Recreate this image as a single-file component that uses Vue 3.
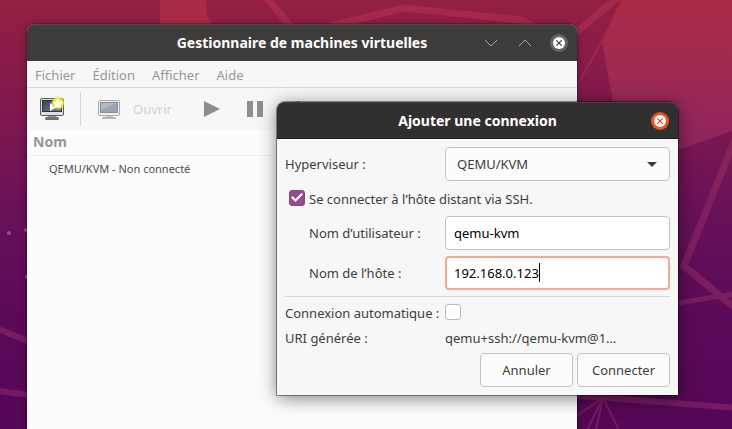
<script setup>
import { nextTick, onMounted, ref, watch } from 'vue'

const menus = ['Fichier', 'Édition', 'Afficher', 'Aide']
const ssh = ref(true)
const auto = ref(false)
const user = ref('qemu-kvm')
const host = ref('192.168.0.123')
const hostField = ref(null)
const caretLeft = ref(0)

// Places the text cursor after the last character of the host name.
function placeCaret() {
  const style = getComputedStyle(hostField.value)
  const ctx = document.createElement('canvas').getContext('2d')
  ctx.font = `${style.fontSize} ${style.fontFamily}`
  caretLeft.value = Math.round(ctx.measureText(host.value).width) + 9
}

onMounted(placeCaret)
watch(host, () => nextTick(placeCaret))
</script>

<template>
  <main class="desktop">
    <svg class="wallpaper" viewBox="0 0 732 429" preserveAspectRatio="xMidYMid slice" aria-hidden="true">
      <defs>
        <linearGradient id="base" x1="0" y1="0" x2="0" y2="1">
          <stop offset="0" stop-color="#932043" />
          <stop offset="0.2" stop-color="#851a4b" />
          <stop offset="0.5" stop-color="#681159" />
          <stop offset="0.75" stop-color="#5b0a58" />
          <stop offset="1" stop-color="#540755" />
        </linearGradient>
        <linearGradient id="facet" gradientUnits="userSpaceOnUse" x1="0" y1="0" x2="0" y2="150">
          <stop offset="0" stop-color="#aa2b45" />
          <stop offset="0.45" stop-color="#a02a51" />
          <stop offset="1" stop-color="#8d245f" />
        </linearGradient>
        <linearGradient id="beam" gradientUnits="userSpaceOnUse" x1="0" y1="0" x2="0" y2="429">
          <stop offset="0" stop-color="#a8294a" />
          <stop offset="0.5" stop-color="#7e1f60" />
          <stop offset="1" stop-color="#751961" />
        </linearGradient>
      </defs>
      <rect width="732" height="429" fill="url(#base)" />
      <path d="M160 0H206L207 15 214 28H160Z" fill="url(#facet)" />
      <path d="M621 0H732V131L678 150 630 140 613 102 602 41Z" fill="url(#facet)" />
      <g fill="none" stroke="url(#beam)" stroke-width="7">
        <path d="M265 -4L294 30" />
        <path d="M330 26L404 8 520 20 545 32" />
        <path d="M622 -6L573 35" />
        <path d="M602 41L577 86" stroke-width="2" />
        <path d="M740 127L684 266 740 312" />
        <path d="M672 304L740 293" stroke-width="5" />
        <path d="M570 395L740 408" stroke-width="6" />
        <path d="M-2 329L30 342" stroke-width="6" />
        <path d="M-2 391L30 395" stroke-width="6" />
      </g>
      <g fill="none" stroke="url(#beam)" stroke-width="2">
        <path d="M603 398L570 420M603 398L583 438M603 398L594 438M603 398L623 438" />
      </g>
      <g fill="#a04c91">
        <circle cx="9" cy="233" r="2" />
        <circle cx="26" cy="230" r="2" />
        <circle cx="27" cy="277" r="2" />
      </g>
    </svg>

    <section class="window manager" aria-labelledby="manager-title">
      <header class="titlebar">
        <h1 id="manager-title">Gestionnaire de machines virtuelles</h1>
        <div class="controls">
          <button type="button" aria-label="Réduire">
            <svg width="18" height="18" viewBox="0 0 18 18"><path d="M3 6L9 12 15 6" fill="none" stroke="#a9a8a6" /></svg>
          </button>
          <button type="button" aria-label="Agrandir">
            <svg width="18" height="18" viewBox="0 0 18 18"><path d="M3 12L9 6 15 12" fill="none" stroke="#a9a8a6" /></svg>
          </button>
          <button type="button" aria-label="Fermer">
            <svg width="18" height="18" viewBox="0 0 18 18">
              <circle cx="9" cy="9" r="9" fill="#666563" /><circle cx="9" cy="9" r="6" fill="#fff" />
              <path d="M6.3 6.3L11.7 11.7M11.7 6.3L6.3 11.7" stroke="#3e3d3b" stroke-width="1.2" />
            </svg>
          </button>
        </div>
      </header>
      <nav class="menubar">
        <button v-for="menu in menus" :key="menu" type="button">{{ menu }}</button>
      </nav>
      <div class="toolbar">
        <button type="button" class="create" aria-label="Nouvelle machine virtuelle">
          <svg width="28" height="26" viewBox="0 0 28 26">
            <defs>
              <linearGradient id="screen" x1="0" y1="0" x2="1" y2="1">
                <stop offset="0" stop-color="#33404f" /><stop offset="1" stop-color="#77869a" />
              </linearGradient>
              <radialGradient id="glow">
                <stop offset="0.5" stop-color="#f1ee25" /><stop offset="0.75" stop-color="#eeea20" stop-opacity="0.8" />
                <stop offset="1" stop-color="#eeea20" stop-opacity="0" />
              </radialGradient>
            </defs>
            <rect x="2.5" y="2.5" width="23" height="17" rx="1.5" fill="#dededb" stroke="#5d5f5b" />
            <rect x="4.5" y="4.5" width="19" height="11" fill="url(#screen)" stroke="#2c3540" />
            <path d="M10 20H18L19 21.5H9Z" fill="#999" />
            <rect x="7" y="21" width="14" height="3" rx="1.5" fill="#70726f" />
            <path d="M12 7L19 11 12 15Z" fill="#fff" />
            <circle cx="20" cy="7" r="7" fill="url(#glow)" />
            <path d="M19.5 1.8L21.5 5.200 25.500 6 22.600 8.700 23.300 12.500 19.800 10.700 16.300 12.500 16.900 8.700 14 6 18 5.200Z" fill="#fffff2" />
          </svg>
        </button>
        <span class="divider"></span>
        <button type="button" class="open" disabled>
          <svg width="24" height="24" viewBox="0 0 24 24">
            <rect x="1.5" y="3.5" width="21" height="15" rx="1.5" fill="#f0f0f0" stroke="#aaa" />
            <rect x="3.5" y="5.5" width="17" height="10" fill="#9aa3af" stroke="#848d98" />
            <path d="M4 6H20L4 13Z" fill="#b1b8c2" />
            <path d="M9 19H15L16 20H8Z" fill="#c5c5c5" />
            <rect x="5" y="20" width="14" height="2" rx="1" fill="#b4b4b4" />
          </svg>
          <span>Ouvrir</span>
        </button>
        <button type="button" class="play" disabled aria-label="Démarrer">
          <svg width="16" height="16" viewBox="0 0 16 16"><path d="M0 0L16 8 0 16Z" fill="#8d8e8f" /></svg>
        </button>
        <button type="button" class="pause" disabled aria-label="Suspendre">
          <svg width="16" height="16" viewBox="0 0 16 16"><path d="M0 0H6V16H0ZM10 0H16V16H10Z" fill="#8d8e8f" /></svg>
        </button>
        <button type="button" class="power" disabled aria-label="Éteindre">
          <svg width="16" height="16" viewBox="0 0 16 16"><path d="M5 3A6 6 0 1 0 11 3M8 0V8" fill="none" stroke="#8d8e8f" stroke-width="2" /></svg>
        </button>
      </div>
      <table class="machines">
        <thead><tr><th scope="col">Nom</th></tr></thead>
        <tbody><tr><td>QEMU/KVM - Non connecté</td></tr></tbody>
      </table>
    </section>

    <section class="window dialog" role="dialog" aria-labelledby="dialog-title">
      <header class="titlebar">
        <h2 id="dialog-title">Ajouter une connexion</h2>
        <div class="controls">
          <button type="button" aria-label="Fermer">
            <svg width="18" height="18" viewBox="0 0 18 18">
              <circle cx="9" cy="9" r="9" fill="#e95420" /><circle cx="9" cy="9" r="6" fill="#fff" />
              <path d="M6.3 6.3L11.7 11.7M11.7 6.3L6.3 11.7" stroke="#d9481a" stroke-width="1.2" />
            </svg>
          </button>
        </div>
      </header>
      <form class="form" @submit.prevent>
        <label for="hypervisor">Hyperviseur :</label>
        <div class="field">
          <select id="hypervisor"><option>QEMU/KVM</option></select>
          <svg class="arrow" width="10" height="5" viewBox="0 0 10 5"><path d="M0 0H10L5 5Z" fill="#3d3d3d" /></svg>
        </div>
        <label class="ssh"><input v-model="ssh" type="checkbox" /><span>Se connecter à l’hôte distant via SSH.</span></label>
        <label class="nested" for="user">Nom d’utilisateur :</label>
        <input id="user" v-model="user" class="entry" type="text" />
        <label class="nested" for="host">Nom de l’hôte :</label>
        <div class="field">
          <input id="host" ref="hostField" v-model="host" class="entry active" type="text" />
          <span class="caret" :style="{ left: caretLeft + 'px' }"></span>
        </div>
        <hr />
        <label class="auto" for="auto">Connexion automatique :</label>
        <input id="auto" v-model="auto" type="checkbox" />
        <span class="uri">URI générée :</span>
        <output class="uri">qemu+ssh://qemu-kvm@1…</output>
        <div class="actions">
          <button type="button">Annuler</button>
          <button type="submit">Connecter</button>
        </div>
      </form>
    </section>
  </main>
</template>

<style>
body {
  margin: 0;
}
</style>

<style scoped>
.desktop {
  position: relative;
  min-height: 100vh;
  overflow: hidden;
  background: #5a0a58;
  font: 13px/18px "Noto Sans", sans-serif;
  color: #3d3d3d;
}
.desktop *,
.desktop *::before {
  box-sizing: border-box;
}
button,
input,
select {
  margin: 0;
  font: inherit;
  color: inherit;
}
svg {
  display: block;
  flex: none;
}
.wallpaper {
  position: absolute;
  inset: 0;
  width: 100%;
  height: 100%;
}
.window {
  position: absolute;
  border-radius: 8px 8px 0 0;
}
.manager {
  inset: 24px 155px 0 27px;
  background: #fcfcfc;
  box-shadow: 0 0 0 1px rgba(0, 0, 0, 0.2), 0 2px 8px rgba(0, 0, 0, 0.35);
}
.dialog {
  top: 102px;
  left: 277px;
  right: 54px;
  background: #f7f7f7;
  box-shadow: 0 0 0 1px rgba(0, 0, 0, 0.4), 0 3px 18px rgba(0, 0, 0, 0.5);
}
.titlebar {
  display: grid;
  grid-template-columns: 1fr auto 1fr;
  align-items: center;
  height: 37px;
  padding: 0 9px;
  border-radius: 8px 8px 0 0;
  background: #3d3c3a;
  box-shadow: inset 0 1px #4c4b49;
}
.dialog .titlebar {
  background: #322f30;
  box-shadow: inset 0 1px #454243, inset 0 -1px #1d1b1c;
}
.titlebar h1,
.titlebar h2 {
  grid-column: 2;
  margin: 0;
  font-size: 14px;
  line-height: 18px;
  font-weight: 700;
  color: #fff;
  white-space: nowrap;
}
.controls {
  display: flex;
  justify-content: flex-end;
  gap: 16px;
}
.controls button,
.menubar button,
.toolbar button {
  display: flex;
  align-items: center;
  padding: 0;
  border: 0;
  background: none;
}
.menubar {
  display: flex;
  gap: 17px;
  height: 27px;
  padding: 1px 8px 0;
  border-bottom: 1px solid #dadada;
  background: #f7f7f7;
  color: #979797;
}
.toolbar {
  display: flex;
  align-items: center;
  height: 42px;
  padding-left: 11px;
  background: #f7f7f7;
}
.divider {
  width: 1px;
  height: 34px;
  margin: 0 16px 0 14px;
  background: #d8d8d8;
}
.toolbar .open {
  gap: 12px;
  color: #d2d2d2;
}
.toolbar .play {
  margin-left: 32px;
}
.toolbar .pause,
.toolbar .power {
  margin-left: 27px;
}
.machines {
  width: 100%;
  border-collapse: collapse;
  text-align: left;
}
.machines th {
  height: 25px;
  padding: 0 6px;
  border-bottom: 1px solid #f0f0f0;
  font-size: 14px;
  color: #979797;
}
.machines td {
  height: 28px;
  padding: 0 22px;
  font-size: 11px;
  color: #4c4c4c;
}
.form {
  display: grid;
  grid-template-columns: 160px minmax(0, 1fr);
  align-items: center;
  gap: 6px 0;
  padding: 8px;
}
.field {
  position: relative;
}
.entry,
select {
  display: block;
  width: 100%;
  height: 34px;
  padding: 0 8px;
  border: 1px solid #c3c3c3;
  border-radius: 4px;
  background: #fff;
  color: #000;
  outline: 0;
}
select {
  appearance: none;
  padding: 0 11px;
  background: #fcfcfc;
  color: #3d3d3d;
}
.entry.active {
  padding: 0 7px;
  border: 2px solid #f4aa90;
}
.arrow {
  position: absolute;
  top: 15px;
  right: 13px;
  pointer-events: none;
}
.caret {
  position: absolute;
  top: 7px;
  width: 1px;
  height: 19px;
  background: #000;
  pointer-events: none;
}
.ssh {
  grid-column: 1 / -1;
  display: flex;
  align-items: center;
  gap: 4px;
  height: 23px;
  padding-left: 4px;
}
.nested {
  padding-left: 24px;
}
input[type="checkbox"] {
  appearance: none;
  width: 16px;
  height: 16px;
  margin-bottom: 2px;
  border: 1px solid #b9b9b9;
  border-radius: 3px;
  background: #fff;
}
input[type="checkbox"]:checked {
  display: grid;
  place-items: center;
  border-color: #864a7f;
  background: #924d8b;
}
input[type="checkbox"]:checked::before {
  content: "";
  width: 12px;
  height: 10px;
  background: #fff;
  clip-path: polygon(0 50%, 13% 35%, 37% 65%, 87% 5%, 100% 18%, 37% 95%);
}
hr {
  grid-column: 1 / -1;
  width: 100%;
  height: 1px;
  margin: 0;
  border: 0;
  background: #dadada;
}
.auto {
  line-height: 20px;
}
.uri {
  white-space: nowrap;
}
.actions {
  grid-column: 1 / -1;
  display: flex;
  justify-content: flex-end;
  gap: 4px;
}
.actions button {
  width: 93px;
  height: 34px;
  padding: 0;
  border: 1px solid #c3c3c3;
  border-radius: 4px;
  background: #fcfcfc;
}
</style>
